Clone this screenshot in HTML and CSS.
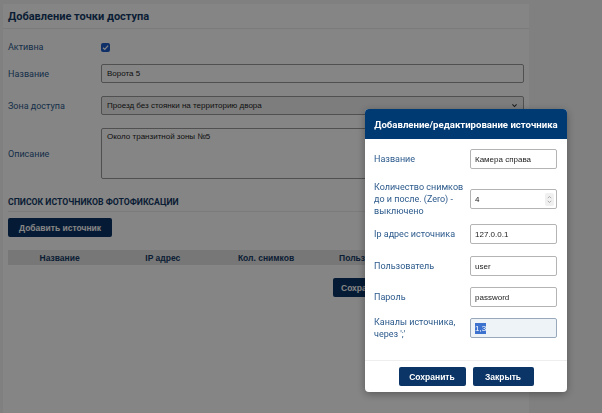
FILE: index.html
```html
<!DOCTYPE html>
<html lang="ru">
<head>
  <meta charset="UTF-8" />
  <title>Добавление точки доступа</title>
  <link rel="stylesheet" href="styles.css">
</head>
<body>

  <!-- Access point form -->
  <div class="card">
    <div class="card-header">
      <h1>Добавление точки доступа</h1>
    </div>

    <div class="form">
      <div class="form-row row-check">
        <label>Активна</label>
        <span class="checkbox">
          <svg viewBox="0 0 10 10" width="9" height="9"><path d="M2.2 5.2 L4.2 7.1 L7.9 2.9" fill="none" stroke="#fff" stroke-width="1.4"/></svg>
        </span>
      </div>
      <div class="form-row">
        <label>Название</label>
        <div class="field">Ворота 5</div>
      </div>
      <div class="form-row">
        <label>Зона доступа</label>
        <div class="field select">
          <span>Проезд без стоянки на территорию двора</span>
          <svg viewBox="0 0 10 10" width="7" height="7"><path d="M2 3.5 L5 6.5 L8 3.5" fill="none" stroke="#333" stroke-width="1.5"/></svg>
        </div>
      </div>
      <div class="form-row row-area">
        <label>Описание</label>
        <div class="field textarea">Около транзитной зоны №5</div>
      </div>
    </div>

    <div class="section">
      <h2>Список источников фотофиксации</h2>
      <button class="btn btn-add">Добавить источник</button>
      <div class="table-head">
        <div>Название</div>
        <div>IP адрес</div>
        <div>Кол. снимков</div>
        <div>Пользователь</div>
        <div>Каналы</div>
      </div>
      <div class="page-actions">
        <button class="btn">Сохранить</button>
        <button class="btn">Отмена</button>
      </div>
    </div>
  </div>

  <!-- Dim layer -->
  <div class="backdrop"></div>

  <!-- Source modal -->
  <div class="modal">
    <div class="modal-header">Добавление/редактирование источника</div>
    <div class="modal-body">
      <div class="m-row m-gap12">
        <label>Название</label>
        <div class="m-input">Камера справа</div>
      </div>
      <div class="m-row m-gap7">
        <label>Количество снимков до и после. (Zero) - выключено</label>
        <div class="m-input number">
          <span>4</span>
          <span class="spinner">
            <svg viewBox="0 0 8 12" width="7" height="11"><path d="M2 4.5 L4 2.5 L6 4.5 M2 7.5 L4 9.5 L6 7.5" fill="none" stroke="#999" stroke-width="0.9"/></svg>
          </span>
        </div>
      </div>
      <div class="m-row m-gap12">
        <label>Ip адрес источника</label>
        <div class="m-input">127.0.0.1</div>
      </div>
      <div class="m-row m-gap11">
        <label>Пользователь</label>
        <div class="m-input">user</div>
      </div>
      <div class="m-row m-gap9">
        <label>Пароль</label>
        <div class="m-input">password</div>
      </div>
      <div class="m-row">
        <label>Каналы источника, через ';'</label>
        <div class="m-input focused"><span class="selected">1,3</span></div>
      </div>
    </div>
    <div class="modal-footer">
      <button class="btn btn-save">Сохранить</button>
      <button class="btn btn-close">Закрыть</button>
    </div>
  </div>

</body>
</html>
```

FILE: styles.css
```css
:root {
  --navy: #0a3566;
  --header: #003a72;
  --label: #2c5a8c;
  --text: #222222;
  --border: #b4b4b4;
  --input-font: "Liberation Sans", Arial, sans-serif;
}

body {
  margin: 0;
  background: #f6f6f6;
  font-family: Roboto, "Noto Sans", sans-serif;
  font-size: 9px;
  color: var(--text);
  overflow: hidden;
  height: 413px;
}

/* page card */

.card {
  margin: 4px 0 0 3px;
  width: 526px;
  min-height: 420px;
  background: #ffffff;
}

.card-header {
  height: 24px;
  padding: 0 5px;
  display: flex;
  align-items: center;
  border-bottom: 1px solid #ececec;
}

.card-header h1 {
  margin: 0;
  font-size: 11px;
  font-weight: 700;
  color: #143a66;
}

.form {
  padding: 9px 5px 0 5px;
}

.form-row {
  display: grid;
  grid-template-columns: 93px 1fr;
  align-items: center;
  margin-bottom: 13px;
}

.form-row label {
  color: var(--label);
}

.row-check {
  height: 18px;
  margin-bottom: 8px;
}

.checkbox {
  width: 9px;
  height: 9px;
  border-radius: 2px;
  background: #1d5bc8;
  display: flex;
  align-items: center;
  justify-content: center;
}

.field {
  height: 17px;
  border: 1px solid #9a9a9a;
  border-radius: 2px;
  padding: 0 5px;
  display: flex;
  align-items: center;
  background: #fff;
  font-family: var(--input-font);
  font-size: 8px;
}

.field.select {
  background: #f0f0f0;
  justify-content: space-between;
}

.field.textarea {
  height: 46px;
  align-items: flex-start;
  padding-top: 3px;
  width: 430px;
}

.row-area {
  margin-bottom: 18px;
}

/* sources */

.section {
  padding: 0 5px;
}

.section h2 {
  margin: 0;
  font-size: 8.7px;
  font-weight: 700;
  text-transform: uppercase;
  color: #143a66;
  padding-bottom: 4px;
  border-bottom: 1px solid #ececec;
}

.btn {
  border: none;
  border-radius: 2px;
  background: var(--navy);
  color: #fff;
  font-family: var(--input-font);
  font-size: 8.5px;
  font-weight: 700;
  height: 19px;
  padding: 0 8px;
  cursor: pointer;
}

.btn-add {
  margin-top: 6px;
  width: 104px;
}

.table-head {
  margin-top: 13px;
  height: 15px;
  background: #e4e4e4;
  display: grid;
  grid-template-columns: repeat(5, 1fr);
  align-items: center;
  font-family: var(--input-font);
  font-size: 8.5px;
  font-weight: 700;
  color: #143a66;
  text-align: center;
}

.page-actions {
  margin-top: 13px;
  padding-left: 325px;
  display: flex;
  gap: 7px;
}

/* modal */

.backdrop {
  position: fixed;
  inset: 0;
  background: rgba(0, 0, 0, 0.48);
}

.modal {
  position: fixed;
  left: 365px;
  top: 109px;
  width: 202px;
  background: #fff;
  border-radius: 4px;
  box-shadow: 0 2px 8px rgba(0, 0, 0, 0.35);
  overflow: hidden;
}

.modal-header {
  height: 30px;
  background: var(--header);
  color: #fff;
  font-weight: 700;
  font-size: 9.6px;
  display: flex;
  align-items: center;
  justify-content: center;
}

.modal-body {
  padding: 10px 10px 20px 9px;
  border-bottom: 1px solid #eeeeee;
}

.m-row {
  display: grid;
  grid-template-columns: 96px 1fr;
  align-items: center;
}

.m-row label {
  color: var(--label);
  line-height: 12px;
  padding-right: 4px;
}

.m-gap12 { margin-bottom: 12px; }
.m-gap11 { margin-bottom: 11px; }
.m-gap9 { margin-bottom: 9px; }
.m-gap7 { margin-bottom: 7px; }

.m-input {
  height: 18px;
  border: 1px solid var(--border);
  border-radius: 2px;
  padding: 0 4px;
  display: flex;
  align-items: center;
  font-family: var(--input-font);
  font-size: 8px;
}

.m-input.number {
  justify-content: space-between;
  padding-right: 2px;
}

.spinner {
  width: 9px;
  height: 13px;
  border-radius: 2px;
  background: #f0f0f0;
  display: flex;
  align-items: center;
  justify-content: center;
}

.m-input.focused {
  background: #eef3f8;
  border-color: #98a9bc;
}

.selected {
  background: #3d72cf;
  color: #fff;
  padding: 1px 0;
}

.modal-footer {
  padding: 6px 0;
  display: flex;
  justify-content: center;
  gap: 7px;
}

.btn-save {
  width: 67px;
}

.btn-close {
  width: 61px;
}
```
